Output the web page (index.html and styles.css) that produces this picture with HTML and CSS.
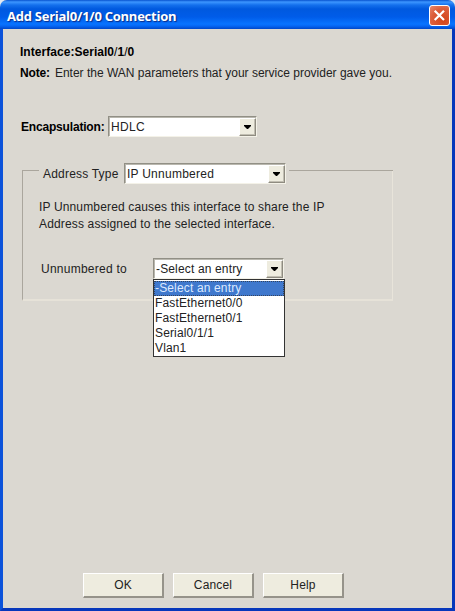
FILE: index.html
```html
<!DOCTYPE html>
<html lang="en">
<head>
<meta charset="utf-8">
<title>Add Serial0/1/0 Connection</title>
<link rel="stylesheet" href="styles.css">
</head>
<body>
<div class="window">
  <header class="titlebar">
    <h1 class="title"><span>Add Serial0/1/0 Connection</span></h1>
    <button class="close" aria-label="Close"><svg width="21" height="21" viewBox="0 0 21 21"><path d="M5.7 5.7 15 15M15 5.7 5.7 15" stroke="#fff" stroke-width="2.2"/></svg></button>
  </header>
  <main class="content">
    <p class="interface"><b>Interface:Serial0<i>/</i>1<i>/</i>0</b></p>
    <p class="note"><b>Note:</b><span>Enter the WAN parameters that your service provider gave you.</span></p>
    <div class="encapsulation">
      <b>Encapsulation:</b>
      <div class="combo combo-encap"><span>HDLC</span><div class="arrow"><svg width="7" height="4" viewBox="0 0 7 4"><path d="M0 0H7V1L4 4H3L0 1Z"/></svg></div></div>
    </div>
    <section class="group">
      <div class="legend">
        <span class="rule rule-start"></span>
        <span class="legend-text">Address Type</span>
        <div class="combo combo-type"><span>IP Unnumbered</span><div class="arrow"><svg width="7" height="4" viewBox="0 0 7 4"><path d="M0 0H7V1L4 4H3L0 1Z"/></svg></div></div>
        <span class="rule rule-end"></span>
      </div>
      <div class="group-body">
        <p class="description">IP Unnumbered causes this interface to share the IP<br>Address assigned to the selected interface.</p>
        <div class="unnumbered">
          <span class="field-label">Unnumbered to</span>
          <div class="combo combo-entry"><span>-Select an entry</span><div class="arrow"><svg width="7" height="4" viewBox="0 0 7 4"><path d="M0 0H7V1L4 4H3L0 1Z"/></svg></div>
            <ul class="menu">
              <li class="selected">-Select an entry</li>
              <li>FastEthernet0/0</li>
              <li>FastEthernet0/1</li>
              <li>Serial0/1/1</li>
              <li>Vlan1</li>
            </ul>
          </div>
        </div>
      </div>
    </section>
  </main>
  <footer class="actions">
    <button class="button">OK</button>
    <button class="button">Cancel</button>
    <button class="button">Help</button>
  </footer>
</div>
</body>
</html>
```
FILE: styles.css
```css
* { box-sizing: border-box; }
html, body { margin: 0; height: 100%; }
body {
  background: #e4e9f2;
  font: 12px/16px "Liberation Sans", Arial, sans-serif;
  letter-spacing: 0.15px;
  color: #222;
  overflow: hidden;
}
p, h1, ul { margin: 0; padding: 0; }
b { color: #000; }
.window {
  display: flex;
  flex-direction: column;
  height: 611px;
  background: #dbd8d1;
  border-radius: 7px 7px 0 0;
  overflow: hidden;
}
.titlebar {
  flex: none;
  display: flex;
  align-items: center;
  justify-content: space-between;
  height: 29px;
  padding: 2px 5px 0 7px;
  background: linear-gradient(#0753cf 0, #3c96ff 2px, #1470ed 5px, #0059df 9px, #005ce9 17px, #0874ff 24px, #0567f4 26px, #0047c9 29px);
}
.title {
  font: bold 13px/18px "Open Sans", sans-serif;
  color: #fff;
  text-shadow: 1px 1px 1px #0c2c86;
  letter-spacing: -0.25px;
  white-space: nowrap;
}
.close {
  width: 21px;
  height: 21px;
  padding: 0;
  border: 1px solid #fff;
  border-radius: 3px;
  background: radial-gradient(circle at 70% 75%, #d34418, #dc5e3b 60%, #e8896d);
}
.close svg { display: block; margin: -1px; }
.content {
  flex: 1;
  border-left: 3px solid #0b52da;
  border-right: 3px solid #0737bb;
  padding: 15px 56px 0 17px;
}
.interface { height: 21px; letter-spacing: 0.04px; }
.interface i { font-style: normal; font-weight: normal; }
.note { display: flex; gap: 5px; white-space: nowrap; letter-spacing: 0; }
.note b { letter-spacing: -0.15px; }
.encapsulation {
  display: flex;
  align-items: center;
  gap: 4px;
  margin: 35px 0 0 1px;
  height: 21px;
}
.encapsulation b { width: 83px; letter-spacing: -0.18px; white-space: nowrap; }
.combo {
  position: relative;
  flex: none;
  display: flex;
  align-items: center;
  justify-content: space-between;
  height: 21px;
  padding-left: 2px;
  background: #fff;
  border: 1px solid;
  border-color: #918f85 #f4f2e8 #f4f2e8 #918f85;
  box-shadow: inset 1px 1px #b9b7ae;
  white-space: nowrap;
}
.combo-encap { width: 149px; letter-spacing: 0.3px; }
.combo-type { width: 162px; letter-spacing: 0.25px; }
.combo-entry { width: 131px; }
.arrow {
  display: flex;
  align-items: center;
  justify-content: center;
  width: 17px;
  height: 18px;
  background: #eeecdf;
  border: 1px solid;
  border-color: #fff #8e8b80 #8e8b80 #fff;
  box-shadow: inset -1px -1px #c1beb2;
}
.group { margin: 26px 0 0 2px; width: 371px; }
.legend { display: flex; align-items: center; height: 21px; }
.rule { height: 1px; background: #aaa69d; margin-top: -7px; }
.rule-start { width: 17px; }
.legend-text { width: 85px; padding-left: 4px; letter-spacing: 0.2px; white-space: nowrap; }
.rule-end { flex: 1; margin-left: 3px; }
.group-body {
  height: 131px;
  margin-top: -14px;
  border: solid;
  border-width: 0 1px 2px 1px;
  border-color: transparent #e8e4da #e6e2d8 #aaa69d;
  padding: 29px 0 0 16px;
}
.description { line-height: 17px; white-space: nowrap; }
.unnumbered { display: flex; align-items: center; margin-top: 25px; height: 21px; }
.field-label { width: 114px; padding: 1px 0 0 2px; letter-spacing: 0.25px; white-space: nowrap; }
.menu {
  position: absolute;
  left: -1px;
  top: 20px;
  width: 132px;
  height: 78px;
  padding-top: 1px;
  border: 1px solid #333;
  background: #fff;
  list-style: none;
  z-index: 1;
}
.menu li { height: 15px; line-height: 15px; padding-left: 1px; }
.menu .selected {
  color: #dce9ff;
  background: #3f78cd;
  outline: 1px dotted #33435e;
  outline-offset: -1px;
}
.actions {
  flex: none;
  display: flex;
  gap: 9px;
  height: 38px;
  padding-left: 80px;
  border: solid;
  border-width: 0 3px 3px;
  border-color: #0737bb #0737bb #0737bb #0b52da;
}
.button {
  width: 81px;
  height: 25px;
  padding: 0;
  border: solid;
  border-width: 1px 2px 2px 1px;
  border-color: #fff #96938a #96938a #fff;
  background: #eeecdf;
  color: #222;
  font: inherit;
  letter-spacing: 0.15px;
}
```
